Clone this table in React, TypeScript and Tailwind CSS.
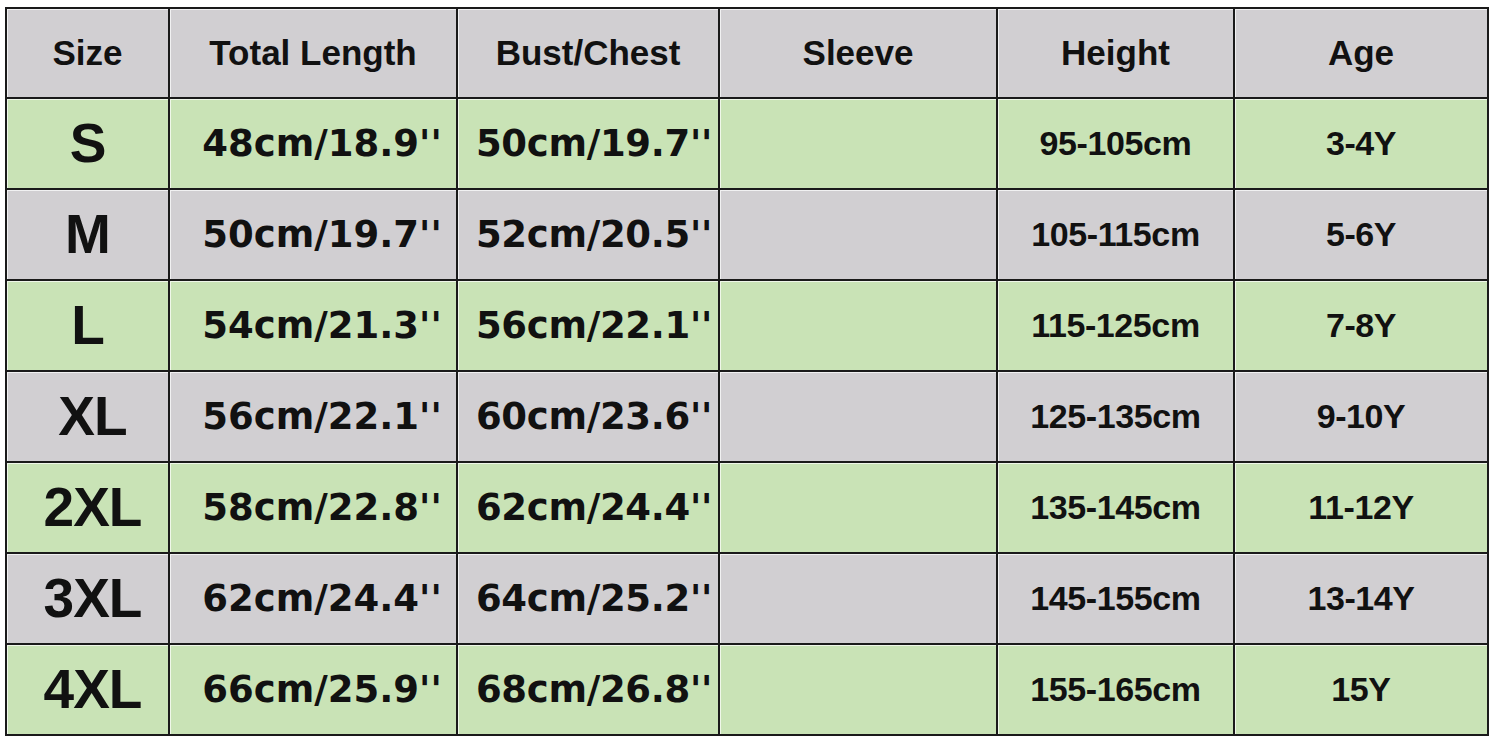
// Kids size chart table

const headers = ['Size', 'Total Length', 'Bust/Chest', 'Sleeve', 'Height', 'Age'];

const rows = [
  ['S', "48cm/18.9''", "50cm/19.7''", '', '95-105cm', '3-4Y'],
  ['M', "50cm/19.7''", "52cm/20.5''", '', '105-115cm', '5-6Y'],
  ['L', "54cm/21.3''", "56cm/22.1''", '', '115-125cm', '7-8Y'],
  ['XL', "56cm/22.1''", "60cm/23.6''", '', '125-135cm', '9-10Y'],
  ['2XL', "58cm/22.8''", "62cm/24.4''", '', '135-145cm', '11-12Y'],
  ['3XL', "62cm/24.4''", "64cm/25.2''", '', '145-155cm', '13-14Y'],
  ['4XL', "66cm/25.9''", "68cm/26.8''", '', '155-165cm', '15Y'],
];

const arial = "font-['Liberation_Sans',Arial,sans-serif] font-bold";
const wide = "font-['DejaVu_Sans',Verdana,sans-serif] font-bold";
const cell = 'shadow-[inset_1px_1px_0_rgba(255,255,255,0.7)]';

export default function App() {
  return (
    <div className="w-[1500px] h-[747px] bg-white overflow-hidden pt-[7px] pl-[5px]">
      <div className="grid grid-cols-[161px_286px_260px_276px_235px_252px] grid-rows-[88px_repeat(7,89px)] gap-[2px] p-[2px] bg-[#1a1a1a] w-fit text-[#111]">
        {headers.map((h) => (
          <div key={h} className={`flex items-center justify-center bg-[#d1cfd2] ${cell} text-[35px] ${arial}`}>
            {h}
          </div>
        ))}
        {rows.map((r, i) => {
          const bg = i % 2 === 0 ? 'bg-[#c9e3b6]' : 'bg-[#d1cfd2]';
          return [
            <div key={i + '-0'} className={`flex items-center justify-center ${bg} ${cell} text-[55px] tracking-[-1px] ${arial}`}>
              <span className={i >= 3 ? 'pl-[10px]' : ''}>{r[0]}</span>
            </div>,
            <div key={i + '-1'} className={`flex items-center justify-center pl-[18px] ${bg} ${cell} text-[37px] whitespace-nowrap ${wide}`}>
              {r[1]}
            </div>,
            <div key={i + '-2'} className={`flex items-center justify-center pl-[12px] ${bg} ${cell} text-[37px] tracking-[-0.3px] whitespace-nowrap ${wide}`}>
              {r[2]}
            </div>,
            <div key={i + '-3'} className={`${bg} ${cell}`} />,
            <div key={i + '-4'} className={`flex items-center justify-center ${bg} ${cell} text-[34px] tracking-[-0.4px] ${arial}`}>
              {r[4]}
            </div>,
            <div key={i + '-5'} className={`flex items-center justify-center ${bg} ${cell} text-[34px] tracking-[-0.4px] ${arial}`}>
              {r[5]}
            </div>,
          ];
        })}
      </div>
    </div>
  );
}
